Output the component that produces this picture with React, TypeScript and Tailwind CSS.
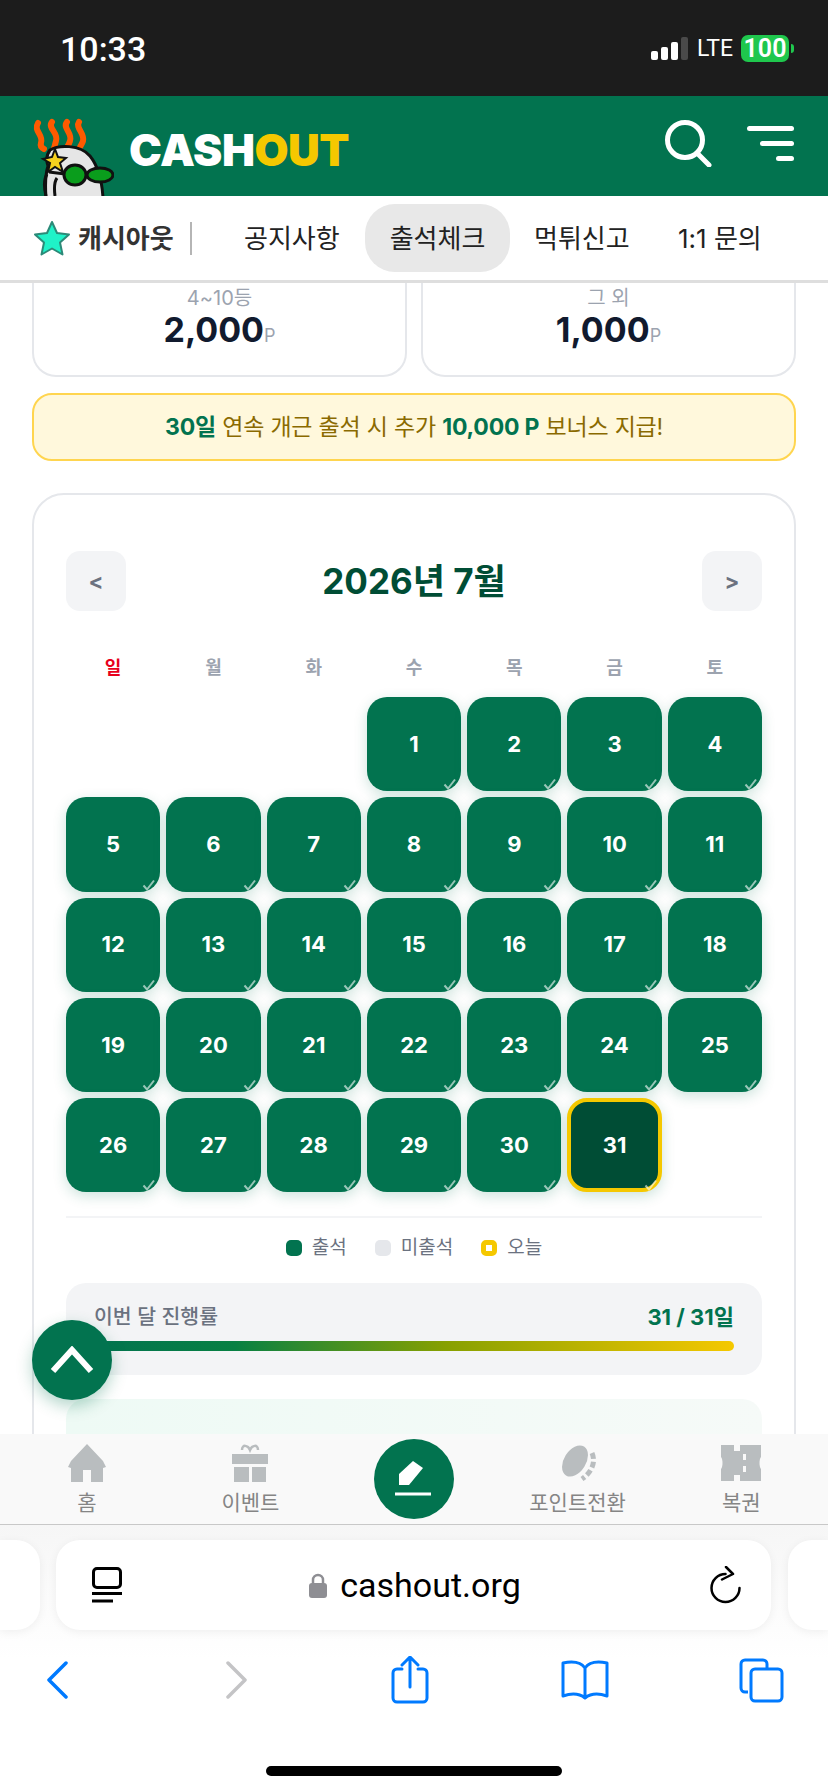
import React from 'react';

const font = { fontFamily: 'Inter, "Noto Sans CJK KR", sans-serif' };

const weekdays = ['일', '월', '화', '수', '목', '금', '토'];
const days = Array.from({ length: 31 }, (_, i) => i + 1);

const Mascot = () => (
  <svg width="84" height="100" viewBox="0 0 84 100" className="shrink-0">
    <g fill="none" stroke="#ff5a00" strokeWidth="6" strokeLinecap="round">
      <path d="M8 27c-5 8 6 12 3 20-1 3 1 5 3 6" />
      <path d="M22 26c-5 6 7 11 4 19-1 3-1 5-2 7" />
      <path d="M37 26c-5 6 6 11 3 19-1 3-2 5-3 6" />
      <path d="M49 26c-4 6 6 11 4 19-1 3-2 4-3 6" />
    </g>
    <path d="M20 54c8-5 30-6 40 6 8 10 12 24 13 42H16c-1-14 0-26 2-32-2-6-1-12 2-16z" fill="#e6e6e6" stroke="#111" strokeWidth="3" />
    <path d="M17 78c-3 5-3 14-1 22M27 82c-3 4-3 10-2 18" fill="none" stroke="#111" strokeWidth="3" />
    <path d="M25 53l3 8 8 1-6 5 3 9-8-5-7 5 2-9-7-4 9-2z" fill="#f7d11e" stroke="#111" strokeWidth="2" />
    <path d="M19 76l16 2M55 79l8 0" stroke="#111" strokeWidth="3" />
    <ellipse cx="45" cy="79" rx="11" ry="10" fill="#0a9d1c" stroke="#111" strokeWidth="3" />
    <ellipse cx="70" cy="79" rx="13" ry="7" fill="#0a9d1c" stroke="#111" strokeWidth="3" />
  </svg>
);

const DayCell = ({ day }: { day: number }) => {
  const today = day === 31;
  return (
    <div
      className={`relative aspect-square rounded-[20px] flex items-center justify-center text-white text-[22px] font-bold shadow-[0_4px_14px_rgba(2,115,79,0.2)] ${
        today ? 'bg-[#004d35] border-[4px] border-[#f5c800]' : 'bg-[#02734f]'
      }`}
    >
      {day}
      <svg
        width="13"
        height="12"
        viewBox="0 0 13 12"
        className={`absolute ${today ? 'right-[1px] bottom-[-3px]' : 'right-[5px] bottom-[1px]'}`}
      >
        <path d="M1.5 6.5 5 10.5 12 1.5" fill="none" stroke="#fff" strokeOpacity="0.6" strokeWidth="2" />
      </svg>
    </div>
  );
};

const NavItem = ({ label, children }: { label: string; children: React.ReactNode }) => (
  <div className="flex flex-col items-center">
    <div className="h-[44px] flex items-center justify-center">{children}</div>
    <span className="text-[21px] leading-[24px] mt-[6px] text-[#858585]">{label}</span>
  </div>
);

export default function App() {
  return (
    <div className="relative w-[828px] h-[1792px] flex flex-col overflow-hidden bg-white" style={font}>
      {/* Status bar */}
      <div className="h-[96px] shrink-0 bg-[#1c1c1c] flex items-center justify-between pl-[60px] pr-[34px] text-white">
        <span className="text-[34px] font-medium leading-none mt-[2px]" style={{ fontFamily: 'Roboto, sans-serif' }}>10:33</span>
        <div className="flex items-center">
          <div className="flex items-end gap-[3px] h-[23px]">
            <div className="w-[7px] h-[9px] rounded-[2px] bg-white" />
            <div className="w-[7px] h-[13px] rounded-[2px] bg-white" />
            <div className="w-[7px] h-[18px] rounded-[2px] bg-white" />
            <div className="w-[7px] h-[23px] rounded-[2px] bg-[#4a4a4a]" />
          </div>
          <span className="ml-[9px] text-[23px] leading-none" style={{ fontFamily: 'Roboto, sans-serif' }}>LTE</span>
          <div className="ml-[8px] w-[48px] h-[27px] rounded-[7px] bg-[#1fc74d] flex items-center justify-center text-[25px] font-semibold leading-none" style={{ fontFamily: 'Roboto, sans-serif' }}>100</div>
          <div className="ml-[2px] w-[3px] h-[9px] rounded-r-full bg-[#1fc74d]" />
        </div>
      </div>

      {/* Header */}
      <div className="h-[100px] shrink-0 bg-[#02734f] flex items-center pl-[30px] pr-[34px] overflow-hidden">
        <Mascot />
        <div className="ml-[15px] text-[44px] font-black leading-none tracking-[-0.5px] text-white mt-[8px]">
          CASH<span className="text-[#f5c800]">OUT</span>
        </div>
        <svg width="48" height="48" viewBox="0 0 48 48" className="ml-auto mt-[-6px]">
          <circle cx="21" cy="21" r="17.5" fill="none" stroke="#fff" strokeWidth="5" />
          <path d="M33 34 45 46" stroke="#fff" strokeWidth="5" strokeLinecap="round" />
        </svg>
        <div className="ml-[35px] mt-[-6px] flex flex-col items-end gap-[10px]">
          <div className="w-[47px] h-[5px] rounded-full bg-white" />
          <div className="w-[34px] h-[5px] rounded-full bg-white" />
          <div className="w-[18px] h-[5px] rounded-full bg-white" />
        </div>
      </div>

      {/* Category nav */}
      <div className="h-[87px] shrink-0 border-b-[3px] border-[#dedede] flex items-center pl-[33px] text-[26px] text-[#222]">
        <svg width="38" height="38" viewBox="0 0 38 38" className="shrink-0 mr-[7px]">
          <path d="M19 3l5 11 12 1.500-9 8 2.500 12L19 29.500 8.500 35.500 11 23.500l-9-8L14 14z" fill="#1ff2c8" stroke="#2c8a78" strokeWidth="2" strokeLinejoin="round" />
        </svg>
        <span className="font-bold text-[#333] w-[96px] whitespace-nowrap">캐시아웃</span>
        <div className="ml-[16px] w-[2px] h-[33px] bg-[#b5b5b5]" />
        <span className="ml-[52px] w-[96px] whitespace-nowrap">공지사항</span>
        <div className="ml-[25px] w-[145px] h-[68px] rounded-[30px] bg-[#e8e8e8] flex items-center justify-center whitespace-nowrap">출석체크</div>
        <span className="ml-[24px] w-[96px] whitespace-nowrap">먹튀신고</span>
        <span className="ml-[48px] whitespace-nowrap">1:1 문의</span>
      </div>

      {/* Scrolled page content */}
      <div className="flex-1 min-h-0 overflow-hidden px-[32px]">
        <div className="grid grid-cols-2 gap-[14px]">
          <div className="h-[94px] border-2 border-t-0 border-[#e5e7eb] rounded-b-[24px] flex flex-col items-center pt-[3px]">
            <span className="text-[20px] leading-[24px] text-[#9ca3af]">4~10등</span>
            <span className="text-[34px] leading-[40px] font-bold text-[#111a2e]">
              2,000<span className="text-[18px] font-normal text-[#9ca3af]">P</span>
            </span>
          </div>
          <div className="h-[94px] border-2 border-t-0 border-[#e5e7eb] rounded-b-[24px] flex flex-col items-center pt-[3px]">
            <span className="text-[20px] leading-[24px] text-[#9ca3af]">그 외</span>
            <span className="text-[34px] leading-[40px] font-bold text-[#111a2e]">
              1,000<span className="text-[18px] font-normal text-[#9ca3af]">P</span>
            </span>
          </div>
        </div>

        <div className="mt-[16px] h-[68px] rounded-[20px] border-2 border-[#ffd54f] bg-[#fff8dc] flex items-center justify-center text-[23px] text-[#8a6a00] tracking-[-0.2px]">
          <span className="font-bold text-[#02734f]">30일</span>
          <span className="whitespace-pre"> 연속 개근 출석 시 추가 </span>
          <span className="font-bold text-[#02734f]">10,000 P</span>
          <span className="whitespace-pre"> 보너스 지급!</span>
        </div>

        <div className="mt-[32px] border-2 border-[#e5e7eb] rounded-[32px] px-[32px] pt-[56px] pb-[40px]">
          <div className="h-[60px] flex items-center justify-between">
            <div className="w-[60px] h-[60px] rounded-[14px] bg-[#f3f4f6] flex items-center justify-center text-[22px] font-bold text-[#6b7280]">&lt;</div>
            <span className="text-[35px] font-bold text-[#004d35]">2026년 7월</span>
            <div className="w-[60px] h-[60px] rounded-[14px] bg-[#f3f4f6] flex items-center justify-center text-[22px] font-bold text-[#6b7280]">&gt;</div>
          </div>

          <div className="mt-[45px] grid grid-cols-7 gap-[6px]">
            {weekdays.map((w, i) => (
              <div key={w} className={`h-[24px] text-center text-[18px] leading-[24px] font-semibold ${i === 0 ? 'text-[#e8001c]' : 'text-[#9ca3af]'}`}>
                {w}
              </div>
            ))}
          </div>

          <div className="mt-[17px] grid grid-cols-7 gap-[6px]">
            {[0, 1, 2].map((n) => (
              <div key={n} />
            ))}
            {days.map((d) => (
              <DayCell key={d} day={d} />
            ))}
          </div>

          <div className="mt-[24px] h-[2px] bg-[#f3f4f6]" />

          <div className="mt-[19px] h-[22px] flex items-center justify-center gap-[28px] text-[19px] text-[#6b7280]">
            <div className="flex items-center gap-[10px]">
              <div className="w-[16px] h-[16px] rounded-[5px] bg-[#02734f]" />
              <span>출석</span>
            </div>
            <div className="flex items-center gap-[10px]">
              <div className="w-[16px] h-[16px] rounded-[5px] bg-[#e5e7eb]" />
              <span>미출석</span>
            </div>
            <div className="flex items-center gap-[10px]">
              <div className="w-[16px] h-[16px] rounded-[5px] border-[5px] border-[#f5c800] bg-white" />
              <span>오늘</span>
            </div>
          </div>

          <div className="mt-[24px] h-[92px] rounded-[20px] bg-[#f3f4f6] px-[28px] pt-[20px]">
            <div className="flex items-center justify-between h-[28px]">
              <span className="text-[20.500px] font-medium text-[#6b7280]">이번 달 진행률</span>
              <span className="text-[22px] font-bold text-[#02734f]">31 / 31일</span>
            </div>
            <div className="mt-[10px] h-[10px] rounded-full bg-[linear-gradient(90deg,#02734f_0%,#078043_22%,#87a000_55%,#f5c800_100%)]" />
          </div>

          <div className="mt-[24px] h-[120px] rounded-[20px] bg-linear-to-r from-[#eefaf5] to-[#f6faf8]" />
        </div>
      </div>

      {/* Bottom tab bar */}
      <div className="h-[91px] shrink-0 bg-[#f9f9f9] border-b border-[#c8c8c8] grid grid-cols-5 px-[5px] pt-[7px]">
        <NavItem label="홈">
          <svg width="40" height="38" viewBox="0 0 40 38">
            <path d="M20 0 36 17 39 23 36 24V38H24V26H16V38H4V24L1 23 4 17z" fill="#b9bdbf" />
          </svg>
        </NavItem>
        <NavItem label="이벤트">
          <svg width="36" height="38" viewBox="0 0 36 38">
            <path d="M10 6c0-6 6-5 8 0 2-5 8-6 8 0" fill="none" stroke="#b9bdbf" strokeWidth="2.500" />
            <path d="M0 10h36v10H0zM2 23h15v15H2zM20 23h14v15H20z" fill="#b9bdbf" />
          </svg>
        </NavItem>
        <div className="flex justify-center">
          <div className="w-[80px] h-[80px] rounded-full bg-[#02734f] flex items-center justify-center -mt-[2px]">
            <svg width="40" height="40" viewBox="0 0 40 40">
              <path d="M17 2 27 9 13 26H3V15z" fill="#fff" transform="translate(2 0)" />
              <path d="M1 35h36" stroke="#fff" strokeWidth="3" />
            </svg>
          </div>
        </div>
        <NavItem label="포인트전환">
          <svg width="38" height="38" viewBox="0 0 38 38">
            <ellipse cx="16" cy="17" rx="11" ry="17" fill="#b9bdbf" transform="rotate(32 16 17)" />
            <path d="M33 9c4 9 0 19-10 26" fill="none" stroke="#b9bdbf" strokeWidth="5" strokeDasharray="6 3" />
          </svg>
        </NavItem>
        <NavItem label="복권">
          <svg width="40" height="36" viewBox="0 0 40 36">
            <path d="M0 0h13v6h6V0h21v12c-2 2-2 10 0 12v12H19v-6h-6v6H0V24c2-2 2-10 0-12z" fill="#b9bdbf" />
            <path d="M22 9h3v6h-3zM22 21h3v6h-3z" fill="#f9f9f9" />
          </svg>
        </NavItem>
      </div>

      {/* Safari chrome */}
      <div className="h-[267px] shrink-0 bg-linear-to-b from-[#f6f6f6] to-white to-50% flex flex-col">
        <div className="mt-[15px] h-[90px] flex items-stretch">
          <div className="w-[40px] shrink-0 bg-white rounded-r-[24px] shadow-[0_2px_10px_rgba(0,0,0,0.06)]" />
          <div className="ml-[16px] w-[715px] shrink-0 bg-white rounded-[24px] shadow-[0_2px_10px_rgba(0,0,0,0.06)] flex items-center pl-[36px] pr-[29px]">
            <svg width="30" height="36" viewBox="0 0 30 36" className="shrink-0">
              <rect x="1.500" y="1.500" width="27" height="19" rx="3.500" fill="none" stroke="#000" strokeWidth="3" />
              <path d="M0 26.500h30M0 34h21" stroke="#000" strokeWidth="3" />
            </svg>
            <div className="flex-1 flex items-center justify-center pr-[2px]" style={{ fontFamily: 'Roboto, sans-serif' }}>
              <svg width="18" height="25" viewBox="0 0 18 25" className="shrink-0">
                <path d="M4 11V7a5 5 0 0 1 10 0v4" fill="none" stroke="#8e8e93" strokeWidth="2.500" />
                <rect x="0" y="10" width="18" height="15" rx="3" fill="#8e8e93" />
              </svg>
              <span className="ml-[13px] text-[34px] leading-none text-black">cashout.org</span>
            </div>
            <svg width="32" height="38" viewBox="0 0 32 38" className="shrink-0">
              <path d="M15.500 8A14 14 0 1 0 29.500 22" fill="none" stroke="#000" strokeWidth="2.500" strokeLinecap="round" />
              <path d="M16 1l7 7-11 5.500" fill="none" stroke="#000" strokeWidth="2.500" strokeLinecap="round" strokeLinejoin="round" />
            </svg>
          </div>
          <div className="ml-[17px] flex-1 bg-white rounded-l-[24px] shadow-[0_2px_10px_rgba(0,0,0,0.06)]" />
        </div>

        <div className="mt-[26px] h-[48px] flex items-center pl-[46px]">
          <svg width="22" height="38" viewBox="0 0 22 38">
            <path d="M20 2 3 19l17 17" fill="none" stroke="#007aff" strokeWidth="3.500" strokeLinecap="round" strokeLinejoin="round" />
          </svg>
          <svg width="22" height="38" viewBox="0 0 22 38" className="ml-[158px]">
            <path d="M2 2 19 19 2 36" fill="none" stroke="#c4c4c6" strokeWidth="3.500" strokeLinecap="round" strokeLinejoin="round" />
          </svg>
          <svg width="38" height="48" viewBox="0 0 38 48" className="ml-[143px]">
            <path d="M11 13H6a4 4 0 0 0-4 4v25a4 4 0 0 0 4 4h26a4 4 0 0 0 4-4V17a4 4 0 0 0-4-4h-5M19 31V2M11 9l8-8 8 8" fill="none" stroke="#007aff" strokeWidth="3" strokeLinecap="round" strokeLinejoin="round" />
          </svg>
          <svg width="48" height="40" viewBox="0 0 48 40" className="ml-[132px]">
            <path d="M24 8C20 2 12 1 2 3v33c9-3 17-2 22 2 5-4 13-5 22-2V3C36 1 28 2 24 8zM24 8v30" fill="none" stroke="#007aff" strokeWidth="3" strokeLinejoin="round" />
          </svg>
          <svg width="45" height="45" viewBox="0 0 45 45" className="ml-[130px]">
            <path d="M9 34H6a4 4 0 0 1-4-4V6a4 4 0 0 1 4-4h18a4 4 0 0 1 4 4v4" fill="none" stroke="#007aff" strokeWidth="3" />
            <rect x="12" y="11" width="31" height="32" rx="4" fill="none" stroke="#007aff" strokeWidth="3" />
          </svg>
        </div>

        <div className="mt-auto mb-[16px] mx-auto w-[296px] h-[10px] rounded-full bg-black" />
      </div>

      {/* Scroll-to-top button */}
      <button className="absolute left-[32px] top-[1320px] w-[80px] h-[80px] rounded-full bg-[#02734f] shadow-[0_6px_16px_rgba(2,115,79,0.3)] flex items-center justify-center">
        <svg width="44" height="28" viewBox="0 0 44 28">
          <path d="M3 25 22 4l19 21" fill="none" stroke="#fff" strokeWidth="6" />
        </svg>
      </button>
    </div>
  );
}
